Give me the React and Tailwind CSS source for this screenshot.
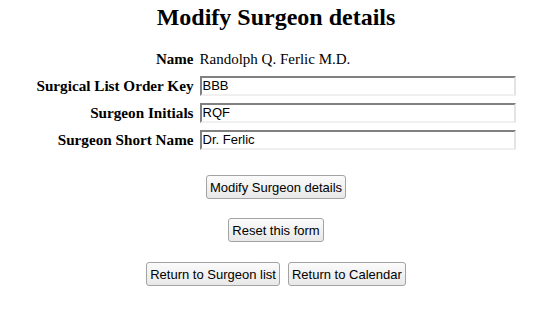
export default function App() {
  const rows = [
    ["Surgical List Order Key", "BBB"],
    ["Surgeon Initials", "RQF"],
    ["Surgeon Short Name", "Dr. Ferlic"],
  ];
  const btn =
    "h-[24px] px-[3px] border border-[#a3a3a3] rounded-[3px] bg-gradient-to-b from-[#fbfbfb] to-[#e8e8e8] text-[13px] text-black font-['Liberation_Sans',Arial,sans-serif] leading-none";
  return (
    <div className="w-[542px] h-[314px] bg-white text-black pl-[10px] flex flex-col items-center font-['Liberation_Serif','Times_New_Roman',serif]">
      <h1 className="text-[24px] font-bold leading-none mt-[5px]">Modify Surgeon details</h1>
      <div className="mt-[20px] grid grid-cols-[auto_316px] gap-x-[6px] items-center">
        <div className="text-right font-bold text-[15px] leading-[20px]">Name</div>
        <div className="text-[15px] leading-[20px]">Randolph Q. Ferlic M.D.</div>
        {rows.map(([l, v]) => (
          <>
            <div key={l} className="text-right font-bold text-[15.2px] leading-[20px] mt-[6.5px]">{l}</div>
            <input
              key={l + "i"}
              defaultValue={v}
              className="mt-[6.5px] h-[20.5px] w-[316px] px-[1px] text-[13px] font-['Liberation_Sans',Arial,sans-serif] border-2 border-t-[#808080] border-l-[#808080] border-b-[#f0f0f0] border-r-[#e4e4e4] outline-none"
            />
          </>
        ))}
      </div>
      <button className={btn + " mt-[25px]"}>Modify Surgeon details</button>
      <button className={btn + " mt-[19px]"}>Reset this form</button>
      <div className="mt-[20px] flex gap-[8px]">
        <button className={btn}>Return to Surgeon list</button>
        <button className={btn}>Return to Calendar</button>
      </div>
    </div>
  );
}
